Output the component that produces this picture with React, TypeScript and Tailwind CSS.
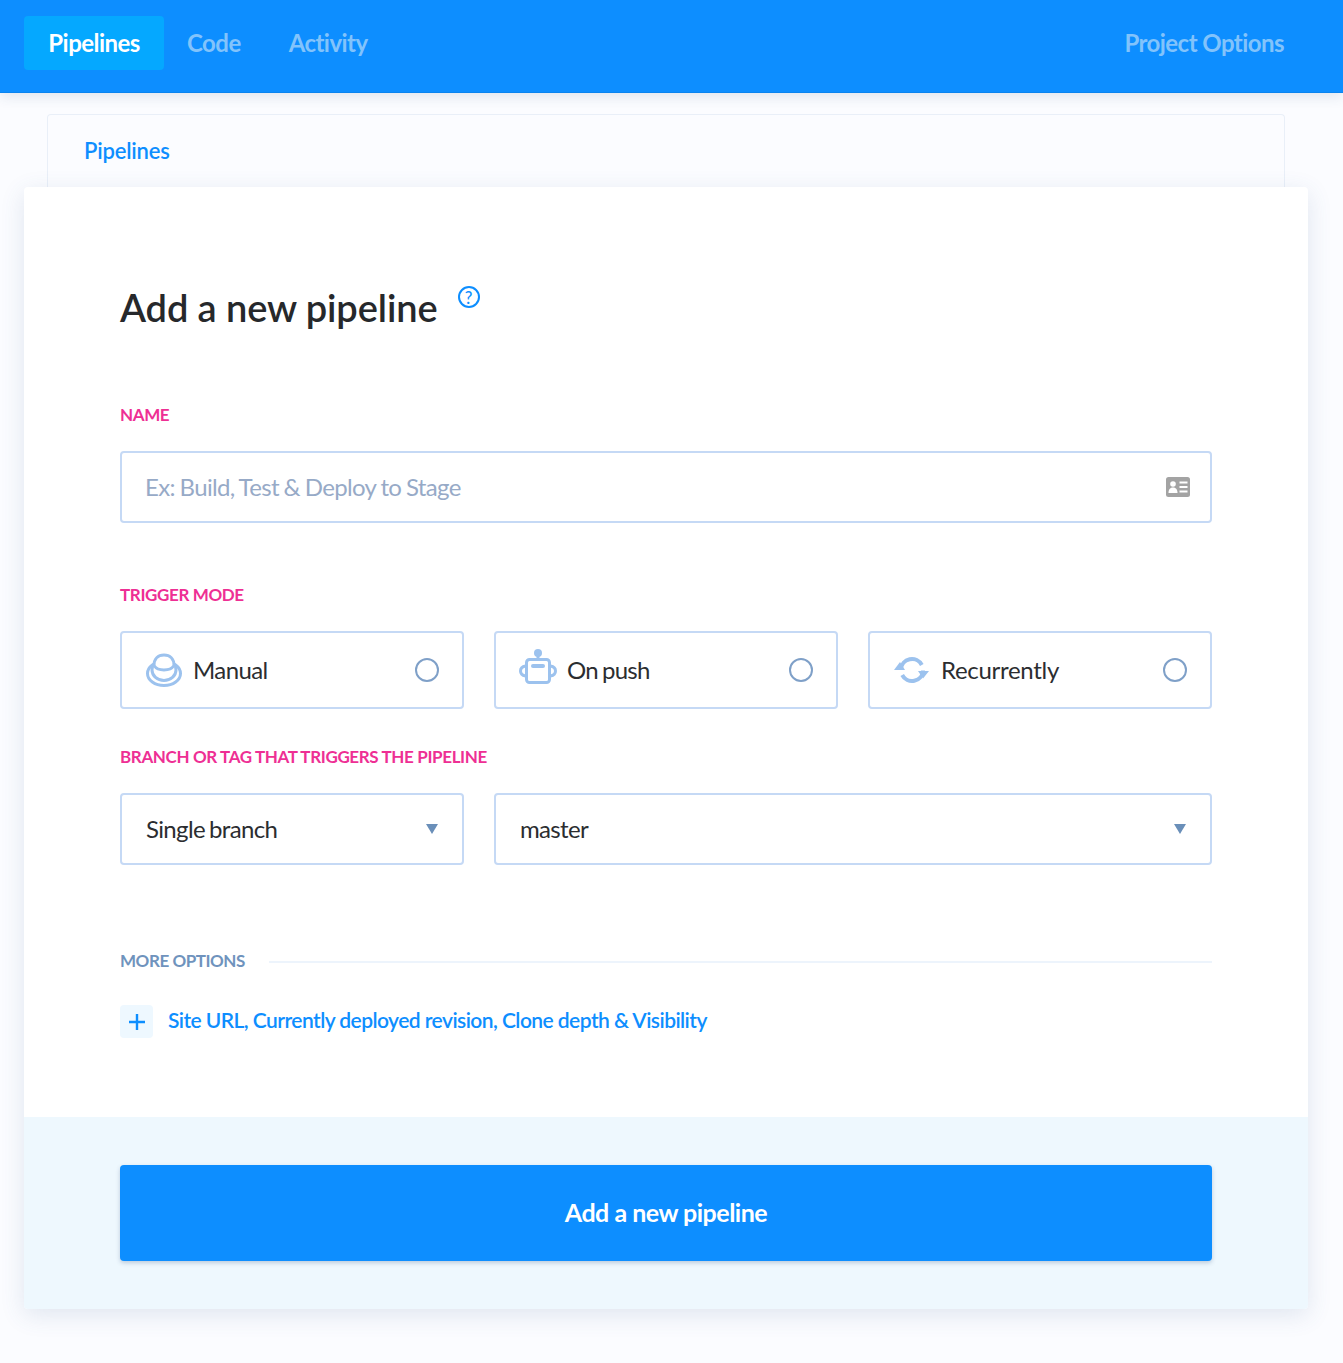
import React from "react";

function Manual() {
  return (
    <svg width="38" height="36" viewBox="0 0 38 36" fill="none" stroke="#9cc2ee" strokeWidth="3">
      <ellipse cx="19" cy="21.500" rx="16.500" ry="12" />
      <ellipse cx="19" cy="18" rx="12" ry="10.500" />
      <path d="M9 13.500C9 7 13 3 19 3s10 4 10 10.500c-2 3-6 4.500-10 4.500s-8-1.500-10-4.500z" fill="#fff" />
    </svg>
  );
}

function Robot() {
  return (
    <svg width="38" height="42" viewBox="0 0 38 42" fill="none">
      <circle cx="19" cy="4" r="4" fill="#9cc2ee" />
      <path d="M19 6v4" stroke="#9cc2ee" strokeWidth="3" />
      <rect x="7.500" y="10.500" width="23" height="23" rx="3" stroke="#9cc2ee" strokeWidth="3" />
      <rect x="12" y="15" width="14" height="4" rx="2" fill="#9cc2ee" />
      <path d="M6.500 17c-3 .5-5 2.500-5 5s2 4.500 5 5M31.500 17c3 .5 5 2.500 5 5s-2 4.500-5 5" stroke="#9cc2ee" strokeWidth="3" />
    </svg>
  );
}

function Recur() {
  return (
    <svg width="38" height="30" viewBox="0 0 38 30" fill="none">
      <path d="M8 14.500A11 11 0 0 1 28.800 10M30 15.500A11 11 0 0 1 9.200 20" stroke="#9cc2ee" strokeWidth="4" />
      <path d="M1 15h11L7 7zM25 16h11l-6 7.500z" fill="#9cc2ee" />
    </svg>
  );
}

function Card() {
  return (
    <svg width="24" height="20" viewBox="0 0 24 20">
      <rect width="24" height="20" rx="2.500" fill="#a3a3a3" />
      <circle cx="7" cy="7" r="2.800" fill="#fff" />
      <path d="M2.500 16c0-4 2-5.500 4.500-5.500S11.500 12 11.500 16z" fill="#fff" />
      <path d="M13.500 4.500h8v2h-8zM13.500 9h8v2h-8zM13.500 13.500h8v2h-8z" fill="#fff" />
    </svg>
  );
}

function Label({ children }: { children: React.ReactNode }) {
  return <div className="text-[17px] leading-[20px] font-bold tracking-[-0.37px] text-[#ee2f94]">{children}</div>;
}

function Radio({ icon, label, track }: { icon: React.ReactNode; label: string; track: string }) {
  return (
    <div className="flex h-[78px] flex-1 items-center rounded-[4px] border-2 border-[#c5d9f5] pl-[23px] pr-[23px]">
      <span className="flex w-[38px] justify-center">{icon}</span>
      <span className={`ml-[10px] text-[24px] text-[#2b2d30] [word-spacing:-1.500px] ${track}`}>{label}</span>
      <span className="ml-auto h-[24px] w-[24px] rounded-full border-2 border-[#7fa0c8]" />
    </div>
  );
}

function Select({ value, className }: { value: string; className: string }) {
  return (
    <div className={`flex h-[72px] items-center justify-between rounded-[4px] border-2 border-[#c5d9f5] pl-[24px] pr-[24px] text-[24px] tracking-[-0.65px] text-[#2b2d30] [word-spacing:-1.500px] ${className}`}>
      <span>{value}</span>
      <span className="h-0 w-0 border-x-[6.500px] border-t-[10px] border-x-transparent border-t-[#6a8fb9]" />
    </div>
  );
}

export default function App() {
  return (
    <div className="h-[1363px] overflow-hidden bg-[#fbfcff] [font-family:Lato,'Liberation_Sans',sans-serif]">
      <header className="flex h-[93px] items-start justify-between border-b border-[#0a84f0] bg-[#0d8eff] pl-[24px] pr-[59px] pt-[16px] shadow-[0_4px_12px_rgba(40,70,120,0.12)]">
        <nav className="flex items-center gap-[24px] text-[24px] font-bold tracking-[-0.55px]">
          <span className="flex h-[54px] w-[140px] items-center justify-center rounded-[4px] bg-[#05a8ff] text-white">Pipelines</span>
          <span className="-ml-[1px] text-[#82c3fb]">Code</span>
          <span className="ml-[24px] text-[#82c3fb]">Activity</span>
        </nav>
        <span className="flex h-[54px] items-center text-[24px] font-bold tracking-[-0.55px] text-[#82c3fb]">Project Options</span>
      </header>

      <div className="mx-[47px] mt-[21px] mr-[58px] h-[73px] rounded-t-[4px] border border-b-0 border-[#e9eff8] bg-[#fbfcff] pl-[36px] pt-[22px] text-[22px] leading-[28px] font-semibold tracking-[-0.2px] text-[#0d8eff]">
        Pipelines
      </div>

      <main className="mx-[24px] mr-[35px] rounded-[4px] bg-white shadow-[0_6px_24px_rgba(60,90,140,0.14)]">
        <div className="h-[930px] px-[96px] pt-[96px]">
          <div className="flex items-start">
            <h1 className="text-[38px] leading-[48px] font-semibold tracking-[-0.1px] text-[#26282b]">Add a new pipeline</h1>
            <span className="mt-[3px] ml-[20px] flex h-[22px] w-[22px] items-center justify-center rounded-full border-2 border-[#0d8eff] text-[17px] leading-none font-medium text-[#0d8eff]">?</span>
          </div>

          <div className="mt-[74px]"><Label>NAME</Label></div>
          <div className="mt-[26px] flex h-[72px] items-center justify-between rounded-[4px] border-2 border-[#c5d9f5] pl-[23px] pr-[20px] text-[24px] tracking-[-0.65px] text-[#97aac7] [word-spacing:-0.800px]">
            <span>Ex: Build, Test &amp; Deploy to Stage</span>
            <Card />
          </div>

          <div className="mt-[62px]"><Label>TRIGGER MODE</Label></div>
          <div className="mt-[26px] flex gap-[30px]">
            <Radio icon={<Manual />} label="Manual" track="tracking-[-0.6px]" />
            <Radio icon={<Robot />} label="On push" track="tracking-[-0.7px]" />
            <Radio icon={<Recur />} label="Recurrently" track="tracking-[-0.3px]" />
          </div>

          <div className="mt-[38px]"><Label>BRANCH OR TAG THAT TRIGGERS THE PIPELINE</Label></div>
          <div className="mt-[26px] flex gap-[30px]">
            <Select value="Single branch" className="w-[344px]" />
            <Select value="master" className="flex-1" />
          </div>

          <div className="mt-[86px] flex items-center gap-[24px]">
            <span className="text-[17px] leading-[20px] font-bold tracking-[-0.45px] text-[#6f93bd]">MORE OPTIONS</span>
            <span className="mt-[2px] h-[2px] flex-1 bg-[#edf4fc]" />
          </div>
          <div className="mt-[34px] flex items-center gap-[15px]">
            <span className="flex h-[33px] w-[33px] items-center justify-center rounded-[4px] bg-[#eef8ff]">
              <svg width="16" height="16" viewBox="0 0 16 16"><path d="M8 0v16M0 8h16" stroke="#0d8eff" strokeWidth="2.400" /></svg>
            </span>
            <span className="-mt-[3px] text-[21px] font-semibold tracking-[-0.55px] text-[#0d8eff]">Site URL, Currently deployed revision, Clone depth &amp; Visibility</span>
          </div>
        </div>

        <div className="h-[192px] rounded-b-[4px] bg-[#eef8fe] px-[96px] pt-[48px]">
          <div className="flex h-[96px] items-center justify-center rounded-[4px] bg-[#0d8eff] text-[25px] font-bold tracking-[-0.5px] text-white shadow-[0_2px_4px_rgba(40,70,120,0.25)]">
            Add a new pipeline
          </div>
        </div>
      </main>
    </div>
  );
}
